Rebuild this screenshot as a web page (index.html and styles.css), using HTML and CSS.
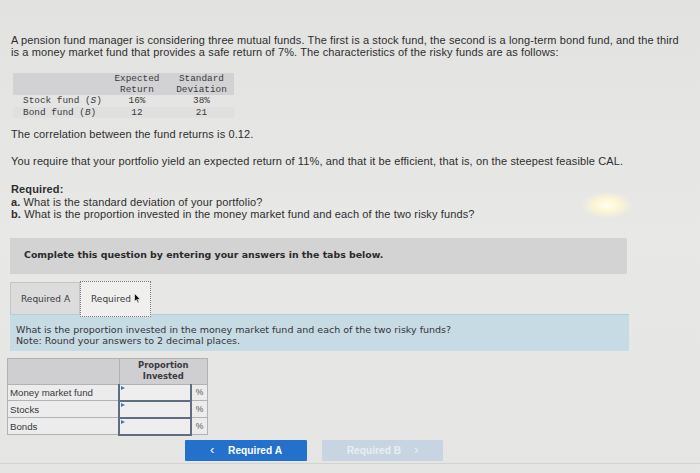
FILE: index.html
```html
<!DOCTYPE html>
<html lang="en">
<head>
<meta charset="utf-8">
<title>Pension fund question</title>
<link rel="stylesheet" href="styles.css">
</head>
<body>
<main class="page">
  <span class="glare"></span>
  <p class="intro">A pension fund manager is considering three mutual funds. The first is a stock fund, the second is a long-term bond fund, and the third is a money market fund that provides a safe return of 7%. The characteristics of the risky funds are as follows:</p>

  <table class="data">
    <thead>
      <tr><th class="lbl"></th><th>Expected<br>Return</th><th>Standard<br>Deviation</th></tr>
    </thead>
    <tbody>
      <tr><td class="lbl">Stock fund (<i>S</i>)</td><td>16%</td><td>38%</td></tr>
      <tr class="alt"><td class="lbl">Bond fund (<i>B</i>)</td><td>12</td><td>21</td></tr>
    </tbody>
  </table>

  <p class="line corr">The correlation between the fund returns is 0.12.</p>
  <p class="line yield">You require that your portfolio yield an expected return of 11%, and that it be efficient, that is, on the steepest feasible CAL.</p>

  <div class="required">
    <strong>Required:</strong><br>
    <b>a.</b> What is the standard deviation of your portfolio?<br>
    <b>b.</b> What is the proportion invested in the money market fund and each of the two risky funds?
  </div>

  <div class="instruction">Complete this question by entering your answers in the tabs below.</div>

  <div class="tabs">
    <div class="tab">Required A</div>
    <div class="tab active">Required <svg class="cursor" width="7" height="11" viewBox="0 0 7 11"><path d="M0.5 0.5 L0.5 8.5 L2.4 6.7 L3.8 10 L5 9.5 L3.7 6.3 L6.3 6.3 Z" fill="#111" stroke="#fff" stroke-width="0.6"/></svg></div>
  </div>

  <div class="prompt">
    What is the proportion invested in the money market fund and each of the two risky funds?<br>
    Note: Round your answers to 2 decimal places.
  </div>

  <table class="answer">
    <thead>
      <tr><th class="name"></th><th colspan="2" class="head">Proportion<br>Invested</th></tr>
    </thead>
    <tbody>
      <tr><td class="name">Money market fund</td><td class="input"><span class="mark"></span></td><td class="pct">%</td></tr>
      <tr><td class="name">Stocks</td><td class="input"><span class="mark"></span></td><td class="pct">%</td></tr>
      <tr><td class="name">Bonds</td><td class="input"><span class="mark"></span></td><td class="pct">%</td></tr>
    </tbody>
  </table>

  <div class="navbar">
    <button class="btn prev"><span class="chev">&lsaquo;</span> Required A</button>
    <button class="btn next">Required B <span class="chev">&rsaquo;</span></button>
  </div>
</main>
</body>
</html>
```

FILE: styles.css
```css
html, body {
  margin: 0;
  padding: 0;
}
body {
  width: 700px;
  height: 473px;
  overflow: hidden;
  background: #e4e4e2;
  font-family: "Liberation Sans", Arial, sans-serif;
  color: #2e2e30;
}
.page {
  position: relative;
  height: 473px;
  padding: 34px 0 0 0;
  box-sizing: border-box;
  background: linear-gradient(180deg, #e2e2e0 0%, #e8e8e6 50%, #e5e5e3 100%);
}
.glare {
  position: absolute;
  left: 582px;
  top: 192px;
  width: 50px;
  height: 26px;
  border-radius: 50%;
  background: radial-gradient(ellipse at center, #fffef2 0%, #fbf6d4 35%, rgba(240,238,220,0) 72%);
}
p { margin: 0; }
.intro, .line, .required {
  margin-left: 11px;
  font-size: 11px;
  letter-spacing: 0.12px;
  line-height: 12px;
}
.intro { width: 672px; }
.data {
  margin: 15px 0 0 13px;
  border-collapse: collapse;
  font-family: "Liberation Mono", "DejaVu Sans Mono", monospace;
  font-size: 9.4px;
  color: #3a3a3c;
  white-space: nowrap;
}
.data th {
  background: #d2d2d4;
  font-weight: normal;
  line-height: 10.5px;
  padding: 1px 0 0;
  text-align: center;
}
.data th:nth-child(2), .data td:nth-child(2) { width: 64px; }
.data th:nth-child(3), .data td:nth-child(3) { width: 65px; }
.data th.lbl, .data td.lbl { width: 82px; padding-left: 10px; text-align: left; }
.data td {
  line-height: 11.5px;
  padding: 0;
  text-align: center;
}
.data tr.alt td { background: #e0e0e0; }
.corr { margin-top: 10px; }
.yield { margin-top: 15px; }
.required {
  margin-top: 16px;
  line-height: 12.5px;
}
.instruction {
  margin: 17px 0 0 10px;
  width: 617px;
  height: 36px;
  box-sizing: border-box;
  padding: 11px 0 0 14px;
  background: #d3d3d3;
  font-family: "DejaVu Sans", Verdana, sans-serif;
  font-weight: bold;
  font-size: 9.4px;
  line-height: 12px;
  color: #2a2a2c;
}
.tabs {
  display: flex;
  margin: 8px 0 0 10px;
  height: 32px;
  align-items: flex-start;
}
.tab {
  box-sizing: border-box;
  height: 32px;
  padding: 10px 0 0 10px;
  width: 70px;
  background: #dcdcdc;
  border: 1px solid #c4c4c4;
  border-bottom: none;
  font-family: "DejaVu Sans", Verdana, sans-serif;
  font-size: 9px;
  line-height: 12px;
  color: #3a3a3e;
  white-space: nowrap;
}
.tab.active {
  position: relative;
  margin-top: -1px;
  height: 36px;
  width: 71px;
  padding-top: 11px;
  padding-left: 10px;
  background: #efefee;
  border: 1px dotted #7b7b80;
  z-index: 1;
}
.cursor {
  vertical-align: -2px;
}
.prompt {
  margin: 0 0 0 10px;
  width: 619px;
  height: 37px;
  box-sizing: border-box;
  padding: 9px 0 0 6px;
  background: #c7dbe4;
  border-top: 1px solid #b8ccd6;
  font-family: "DejaVu Sans", Verdana, sans-serif;
  font-size: 9.5px;
  line-height: 11.5px;
  color: #333338;
  white-space: nowrap;
}
.answer {
  margin: 7px 0 0 7px;
  border-collapse: collapse;
  font-family: "Liberation Sans", Arial, sans-serif;
  font-size: 9.7px;
  color: #38383c;
}
.answer th, .answer td {
  border: 1px solid #b2b2b4;
  padding: 0;
}
.answer th {
  background: #cfcfd1;
  height: 25px;
  font-family: "DejaVu Sans", Verdana, sans-serif;
  font-weight: bold;
  font-size: 8.4px;
  line-height: 11px;
  vertical-align: middle;
  color: #3a3a40;
}
.answer th.name { width: 110px; }
.answer td {
  height: 15px;
  background: #ececec;
}
.answer td.name {
  padding-left: 2px;
  text-align: left;
  width: 108px;
}
.answer td.input {
  width: 70px;
  position: relative;
  background: #eeeeee;
  border: 2px solid #5e6e80;
  border-top-width: 1.5px;
}
.mark {
  position: absolute;
  left: 1px;
  top: 1px;
  width: 0;
  height: 0;
  border-left: 4px solid #3a78c0;
  border-top: 2px solid transparent;
  border-bottom: 2px solid transparent;
}
.answer td.pct {
  width: 15px;
  text-align: center;
  font-size: 8.5px;
  color: #555;
}
.navbar {
  display: flex;
  gap: 15px;
  margin-top: 4px;
  padding: 0 0 2px 185px;
  border-bottom: 1px solid #d2d2d0;
}
.btn {
  width: 122px;
  height: 21px;
  border: none;
  border-radius: 1px;
  font-family: "Liberation Sans", Arial, sans-serif;
  font-weight: bold;
  font-size: 10.2px;
  padding: 0;
}
.btn.prev {
  background: #2471cc;
  color: #ffffff;
}
.btn.next {
  width: 121px;
  background: #c6d5e1;
  color: #e8eef3;
}
.chev {
  font-size: 13px;
  font-weight: normal;
  line-height: 10px;
}
.btn.prev .chev { margin: 0 11px 0 0; }
.btn.next .chev { margin: 0 0 0 10px; }
```
